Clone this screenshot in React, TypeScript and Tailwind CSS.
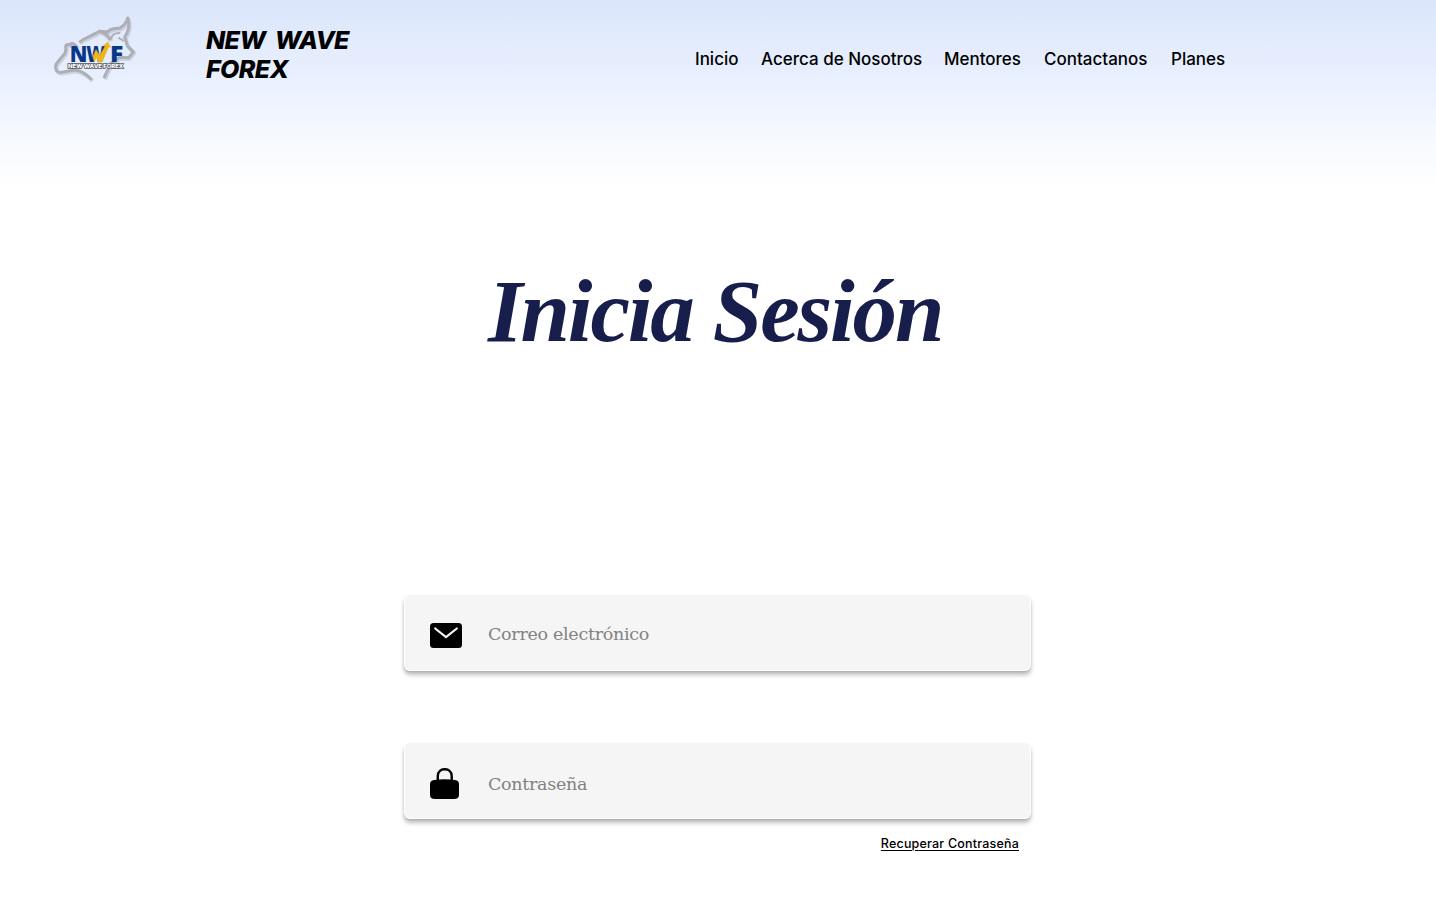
import React from "react";

const links = [
  { label: "Inicio", width: "w-[43px]" },
  { label: "Acerca de Nosotros", width: "w-[160px]" },
  { label: "Mentores", width: "w-[77px]" },
  { label: "Contactanos", width: "w-[104px]" },
  { label: "Planes", width: "w-[54px]" },
];

const bull =
  "M103 112 Q112 103 128 97 L164 79 L192 81 M164 79 Q188 88 196 105 M187 80 Q202 68 224 70 Q244 57 248 39 Q258 69 239 96 L247 122 L265 141 L251 158 L224 157 L197 176 L177 219";
const bear =
  "M96 128 Q82 108 76 119 Q58 116 63 130 L60 145 L40 169 Q27 182 34 196 Q42 206 58 200 L84 196 Q112 194 140 224";

function Logo() {
  return (
    <svg className="ml-[45px] mt-[5px] h-[85px] w-[100px] shrink-0" viewBox="0 0 300 255">
      <g fill="none" stroke="#9699a2" strokeOpacity="0.3" strokeWidth="12" strokeLinejoin="round" transform="translate(3 4)">
        <path d={bull} />
        <path d={bear} />
      </g>
      <g fill="none" stroke="#adafb5" strokeWidth="9" strokeLinejoin="round">
        <path d={bull} />
        <path d={bear} />
        <path d="M199 103 Q199 83 226 84 M220 98 L237 108" strokeWidth="6" />
      </g>
      <g fontFamily="Open Sans, sans-serif" fontWeight="800" fontSize="67" fill="#07368b">
        <text x="74" y="171" textLength="53" lengthAdjust="spacingAndGlyphs">N</text>
        <text x="124" y="171" textLength="58" lengthAdjust="spacingAndGlyphs">W</text>
        <text x="195" y="171" textLength="40" lengthAdjust="spacingAndGlyphs">F</text>
      </g>
      <path d="M144 155 L153 134 L164 152 L181 124 L175 123 L188 111 L197 127 L191 125 L171 171 L161 171 L153 157 L148 170 Z" fill="#eeb51b" stroke="#eeb51b" strokeWidth="2" />
      <text x="69" y="189" textLength="166" lengthAdjust="spacingAndGlyphs" fontFamily="Inter, sans-serif" fontSize="15" fontWeight="800" fill="#fff" stroke="#53565e" strokeWidth="4" paintOrder="stroke">NEW WAVE FOREX</text>
    </svg>
  );
}

function MailIcon() {
  return (
    <svg className="h-[25px] w-8" viewBox="0 0 32 25">
      <rect width="32" height="25" rx="3.5" />
      <path d="M5.2 5.5 L16 14 L26.8 5.5" fill="none" stroke="#f5f5f5" strokeWidth="2.2" strokeLinecap="round" />
    </svg>
  );
}

function LockIcon() {
  return (
    <svg className="h-[31px] w-[29px]" viewBox="0 0 29 31">
      <path d="M4 12 Q14.5 10.4 25 12 Q29 12.5 29 16 V27 Q29 31 24 31 H5 Q0 31 0 27 V16 Q0 12.5 4 12 Z" />
      <path d="M7.8 13 V8 C7.8 -1.1 21.7 -1.1 21.7 8 V13" fill="none" stroke="#000" strokeWidth="2.4" />
    </svg>
  );
}

const field =
  "flex h-[76px] w-[627px] rounded-[6px] border-x border-b border-white bg-[#f5f5f5] pl-[25px] shadow-[0_4px_4px_rgba(0,0,0,0.25),0_1px_2px_rgba(0,0,0,0.12)]";
const placeholder =
  "font-['DejaVu_Serif',serif] text-[17.5px] leading-[26px] tracking-[-0.3px] text-[#828282]";

export default function App() {
  return (
    <div className="h-[919px] w-full overflow-hidden bg-[linear-gradient(180deg,#dbe6fb_0px,#e8effe_75px,#f3f7ff_125px,#ffffff_185px)] bg-white text-black">
      <header className="flex h-[180px] items-start">
        <Logo />
        <div className="ml-[61px] mt-[26px] w-[170px] font-['Inter',sans-serif] text-[25px] font-extrabold italic leading-[29px] tracking-[-0.55px] [word-spacing:4.5px]">
          NEW WAVE
          <br />
          FOREX
        </div>
        <nav className="ml-[319px] mt-[46px] flex gap-[23px] whitespace-nowrap font-['Inter',sans-serif] text-[17px] font-medium leading-[26px]">
          {links.map((l) => (
            <a key={l.label} className={l.width}>
              {l.label}
            </a>
          ))}
        </nav>
      </header>
      <main className="flex flex-col">
        <h1 className="ml-[488px] mt-[78px] h-[102px] whitespace-nowrap font-['Liberation_Serif',serif] text-[89px] font-bold italic leading-[106px] tracking-[-2.15px] text-[#181e4b]">
          Inicia Sesión
        </h1>
        <form className="ml-[404px] mt-[235px] flex w-[627px] flex-col">
          <label className={field}>
            <span className="mt-[28px] w-[58px]"><MailIcon /></span>
            <span className={placeholder + " mt-[26px]"}>Correo electrónico</span>
          </label>
          <label className={field + " mt-[72px]"}>
            <span className="mt-[25px] w-[58px]"><LockIcon /></span>
            <span className={placeholder + " mt-[28px]"}>Contraseña</span>
          </label>
          <a className="mr-[12px] mt-[15px] self-end whitespace-nowrap font-['Inter',sans-serif] text-[12.5px] font-medium leading-[20px] tracking-[0.2px] underline decoration-1 underline-offset-2">
            Recuperar Contraseña
          </a>
        </form>
      </main>
    </div>
  );
}
